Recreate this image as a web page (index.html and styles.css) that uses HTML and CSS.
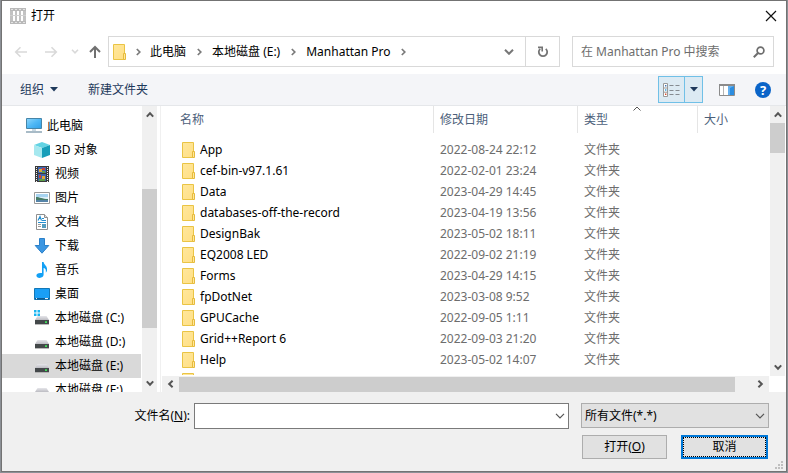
FILE: index.html
```html
<!DOCTYPE html>
<html lang="zh-CN">
<head>
<meta charset="UTF-8">
<meta name="viewport" content="width=device-width, initial-scale=1.0">
<title>打开</title>
<link rel="stylesheet" href="styles.css">
</head>
<body>
<!-- shared icons -->
<svg class="sprite" aria-hidden="true">
  <defs>
    <linearGradient id="g-folder" x1="0" y1="0" x2="1" y2="1">
      <stop offset="0" stop-color="#ffe79c"/><stop offset="1" stop-color="#ffdf85"/>
    </linearGradient>
    <linearGradient id="g-screen" x1="0" y1="0" x2="1" y2="1">
      <stop offset="0" stop-color="#8fd6fb"/><stop offset=".5" stop-color="#4fb8f5"/><stop offset="1" stop-color="#2f9fe8"/>
    </linearGradient>
    <linearGradient id="g-drive" x1="0" y1="0" x2="0" y2="1">
      <stop offset="0" stop-color="#e6e6ea"/><stop offset="1" stop-color="#bcbcc2"/>
    </linearGradient>
  </defs>
  <symbol id="folder" viewBox="0 0 14 16">
    <path d="M.5.5h11v15H.5z" fill="url(#g-folder)" stroke="#eac444"/>
    <path d="M10.5 9.5h2v6h-2z" fill="#ffe79c" stroke="#e6bb3c"/>
  </symbol>
  <symbol id="drive" viewBox="0 0 16 16">
    <path d="M3.5 6h9L15 10H1z" fill="url(#g-drive)"/>
    <path d="M1 10h14v4H1z" fill="#44484a"/>
    <path d="M1 14h14v.8H1z" fill="#a9a9a9"/>
    <path d="M11 11.2h2v1.8h-2z" fill="#3fe05a"/>
  </symbol>
  <symbol id="right" viewBox="0 0 5 8"><path d="M.8 1 3.8 4 .8 7" fill="none" stroke="#7a7a7a" stroke-width="1.7"/></symbol>
  <symbol id="down" viewBox="0 0 10 6"><path d="M1 .8l4 4 4-4" fill="none" stroke="currentColor" stroke-width="1.2"/></symbol>
  <symbol id="bar-up" viewBox="0 0 8 7"><path d="M.8 5.6 4 2.2l3.2 3.4" fill="none" stroke="#555" stroke-width="2"/></symbol>
  <symbol id="bar-down" viewBox="0 0 8 7"><path d="M.8 1.4 4 4.8l3.2-3.4" fill="none" stroke="#555" stroke-width="2"/></symbol>
  <symbol id="bar-left" viewBox="0 0 7 8"><path d="M5.6.8 2.2 4l3.4 3.2" fill="none" stroke="#555" stroke-width="2"/></symbol>
  <symbol id="bar-right" viewBox="0 0 7 8"><path d="M1.4.8 4.8 4 1.4 7.2" fill="none" stroke="#555" stroke-width="2"/></symbol>
</svg>

<div class="dialog" role="dialog" aria-labelledby="dialog-title">
  <header class="titlebar">
    <svg class="app-icon" width="16" height="16" viewBox="0 0 16 16" aria-hidden="true">
      <path d="M0 0h16v3H0zM0 13h16v3H0z" fill="#b9b9b9"/>
      <path d="M1 1h2v1H1zM5 1h2v1H5zM9 1h2v1H9zM13 1h2v1h-2zM1 14h2v1H1zM5 14h2v1H5zM9 14h2v1H9zM13 14h2v1h-2z" fill="#e3e3e3"/>
      <path d="M0 3h3v10H0zM5 3h2v10H5zM9 3h2v10H9zM13 3h3v10h-3z" fill="#c2c2c2"/>
      <path d="M0 7h16v1H0z" fill="#d0d0d0"/>
    </svg>
    <h1 class="title" id="dialog-title">打开</h1>
    <button class="close" type="button" aria-label="关闭">
      <svg width="12" height="12" viewBox="0 0 12 12"><path d="M1 1l10 10M11 1 1 11" stroke="#111" stroke-width="1.2"/></svg>
    </button>
  </header>

  <div class="location">
    <div class="history">
      <button class="history-btn off" type="button" aria-label="返回" disabled>
        <svg width="14" height="12" viewBox="0 0 14 12"><path d="M13 6H2M6.5 1.2 1.7 6l4.8 4.800" fill="none" stroke="currentColor" stroke-width="1.6"/></svg>
      </button>
      <button class="history-btn off" type="button" aria-label="前进" disabled>
        <svg width="14" height="12" viewBox="0 0 14 12"><path d="M1 6h11M7.5 1.2 12.3 6l-4.8 4.800" fill="none" stroke="currentColor" stroke-width="1.6"/></svg>
      </button>
      <button class="history-btn recent off" type="button" aria-label="最近浏览的位置" disabled>
        <svg width="8" height="5" viewBox="0 0 8 5"><path d="M1 .8l3 3 3-3" fill="none" stroke="currentColor" stroke-width="1.6"/></svg>
      </button>
      <button class="history-btn up" type="button" aria-label="上移">
        <svg width="14" height="14" viewBox="0 0 14 14"><path d="M7 13V2M2 7l5-5 5 5" fill="none" stroke="#707070" stroke-width="2"/></svg>
      </button>
    </div>
    <div class="address">
      <svg width="14" height="16" aria-hidden="true"><use href="#folder"/></svg>
      <span class="sep first"><svg width="5" height="8"><use href="#right"/></svg></span>
      <button class="crumb" type="button">此电脑</button>
      <span class="sep"><svg width="5" height="8"><use href="#right"/></svg></span>
      <button class="crumb" type="button">本地磁盘 (E:)</button>
      <span class="sep"><svg width="5" height="8"><use href="#right"/></svg></span>
      <button class="crumb" type="button">Manhattan Pro</button>
      <span class="sep"><svg width="5" height="8"><use href="#right"/></svg></span>
      <button class="address-drop" type="button" aria-label="以前的位置">
        <svg width="10" height="6" viewBox="0 0 10 6"><path d="M1 .8l4 4 4-4" fill="none" stroke="#777" stroke-width="2"/></svg>
      </button>
      <button class="refresh" type="button" aria-label="刷新">
        <svg width="12" height="12" viewBox="0 0 12 12"><path d="M8.8 2.8A4.2 4.2 0 1 1 3.2 2.8" fill="none" stroke="#747474" stroke-width="1.8"/><path d="M1 1.4h4.2v4.2" fill="none" stroke="#747474" stroke-width="1.6"/></svg>
      </button>
    </div>
    <div class="search">
      <input class="search-input" type="text" placeholder="在 Manhattan Pro 中搜索" aria-label="在 Manhattan Pro 中搜索">
      <svg width="12" height="12" viewBox="0 0 12 12" aria-hidden="true"><circle cx="7.5" cy="4.5" r="3.4" fill="none" stroke="#6e6e6e" stroke-width="1.7"/><path d="M5 7 .8 11.2" stroke="#6e6e6e" stroke-width="2"/></svg>
    </div>
  </div>

  <div class="toolbar">
    <button class="tool" type="button">组织
      <svg width="8" height="5" viewBox="0 0 8 5"><path d="M0 0h8L4 4.5z" fill="#1e395b"/></svg>
    </button>
    <button class="tool" type="button">新建文件夹</button>
    <div class="view">
      <button class="view-mode" type="button" aria-label="更改您的视图">
        <svg width="17" height="14" viewBox="0 0 17 14">
          <path d="M.5.5h4v13h-4zM.5 5h4M.5 9.2h4" fill="#fff" stroke="#999"/>
          <path d="M2 2h1.4v1.500H2z" fill="#3f78b8"/><path d="M2 6.3h1.4v1.500H2z" fill="#2fa0e0"/><path d="M2 10.5h1.4V12H2z" fill="#d8502f"/>
          <path d="M6.5 2.5h4M12.5 2.5h4M6.5 7.5h4M12.5 7.5h4M6.5 11.5h4M12.5 11.5h4" stroke="#858b91"/>
        </svg>
      </button>
      <button class="view-more" type="button" aria-label="更多选项">
        <svg width="8" height="5" viewBox="0 0 8 5"><path d="M0 0h8L4 4.5z" fill="#1e395b"/></svg>
      </button>
    </div>
    <button class="icon-btn" type="button" aria-label="显示预览窗格">
      <svg width="16" height="12" viewBox="0 0 16 12">
        <path d="M.5.5h15v11H.5z" fill="#fff" stroke="#8b8b8b"/>
        <path d="M0 0h16v2H0z" fill="#8b8b8b"/><path d="M4.500 2v9" stroke="#b5b5b5"/>
        <path d="M9 2h6v9H9z" fill="#63b0f0"/><path d="M11 4l4-2v9h-4z" fill="#2b8de0"/>
      </svg>
    </button>
    <button class="help" type="button" aria-label="获取帮助">?</button>
  </div>

  <main class="browser">
    <nav class="places" aria-label="位置">
      <a class="place root" href="#"><svg width="17" height="16" viewBox="0 0 17 16"><path d="M.5.5h15v10H.5z" fill="url(#g-screen)" stroke="#4685a8"/><path d="M6 11h4v2H6z" fill="#c9d8e2"/><path d="M0 14h16" stroke="#8ba4b5" stroke-width="1.5"/></svg>此电脑</a>
      <a class="place" href="#"><svg width="16" height="16" viewBox="0 0 16 16"><path d="M0 3l8-3 8 3-8 3z" fill="#62d3e3"/><path d="M0 3l8 3v10l-8-3z" fill="#a6e8ef"/><path d="M8 6l8-3v10l-8 3z" fill="#169eb9"/></svg>3D 对象</a>
      <a class="place" href="#"><svg width="16" height="16" viewBox="0 0 16 16"><path d="M1 0h14v16H1z" fill="#3a3a3a"/><path d="M4 1h8v6H4z" fill="#4267b5"/><path d="M4 8h8v7H4z" fill="#3d64ad"/><path d="M5 3h3v3H5zM8 10h3v3H8z" fill="#e0a63a"/><path d="M8 2h3v2H8zM5 9h2v3H5z" fill="#cb4038"/><path d="M8 5h3v2H8zM5 13h6v2H5z" fill="#5d9c48"/><path d="M2.5 1v15M13.5 1v15" stroke="#f2f2f2" stroke-dasharray="1 1"/></svg>视频</a>
      <a class="place" href="#"><svg width="16" height="16" viewBox="0 0 16 16"><path d="M.5 2.5h15v11H.5z" fill="#fff" stroke="#999"/><path d="M2 4h12v8H2z" fill="#a8d4f0"/><path d="M2 7h12v3H2z" fill="#deeff8"/><path d="M2 7c4 0 6 2 12 2v2H2z" fill="#477c66"/><path d="M2 10h12v2H2z" fill="#5684a8"/></svg>图片</a>
      <a class="place" href="#"><svg width="16" height="16" viewBox="0 0 16 16"><path d="M2.5.5h8l3 3v12h-11z" fill="#fff" stroke="#8f8f8f"/><path d="M10.5.5v3h3" fill="#ddd" stroke="#8f8f8f"/><path d="M4 6.5 6 2.500l1.500 4M8 4.500h2M8 6.500h4M4 8.500h8" fill="none" stroke="#258fd0" stroke-width="1.2"/><path d="M4 10.5h3M4 12.5h3" stroke="#999"/><path d="M8 10h4v4H8z" fill="#559dbf"/></svg>文档</a>
      <a class="place" href="#"><svg width="16" height="16" viewBox="0 0 16 16"><path d="M5.5.5h5v7h4.300L8 15.200 1.200 7.500h4.300z" fill="#3d97e2" stroke="#2b80c9"/></svg>下载</a>
      <a class="place" href="#"><svg width="16" height="16" viewBox="0 0 16 16"><path d="M8 0h1.600c.3 3 4.200 4 3.400 8.500-.4 1.500-1 2-1.200 2C12.300 7 10.800 6.300 9.600 6v6.800c0 1.700-1.700 3.100-4 3.100-1.900 0-3.200-1-3.200-2.400 0-1.800 2.200-3 5.600-2.400z" fill="#12a0f5"/></svg>音乐</a>
      <a class="place" href="#"><svg width="16" height="16" viewBox="0 0 16 16"><path d="M.5 2.5h15v11H.5z" fill="#1a9ff6" stroke="#1277b6"/><path d="M1 12h14v1.500H1z" fill="#0d5b93"/><path d="M2 12.600h1M11 12.600h3" stroke="#fff"/></svg>桌面</a>
      <a class="place" href="#"><svg width="16" height="16" viewBox="0 0 16 16"><use href="#drive"/><path d="M0 0h2.500v2.500H0zM3.500 0H6v2.500H3.500zM0 3.500h2.500V6H0zM3.500 3.500H6V6H3.500z" fill="#18b4f0"/></svg>本地磁盘 (C:)</a>
      <a class="place" href="#"><svg width="16" height="16"><use href="#drive"/></svg>本地磁盘 (D:)</a>
      <a class="place current" href="#"><svg width="16" height="16"><use href="#drive"/></svg>本地磁盘 (E:)</a>
      <a class="place" href="#"><svg width="16" height="16"><use href="#drive"/></svg>本地磁盘 (F:)</a>
    </nav>
    <div class="vbar">
      <svg width="8" height="7"><use href="#bar-up"/></svg>
      <div class="vbar-track"><div class="thumb places-thumb"></div></div>
      <svg width="8" height="7"><use href="#bar-down"/></svg>
    </div>

    <section class="files">
      <div class="files-view">
        <table class="files-table">
          <thead>
            <tr>
              <th class="col-name">名称</th>
              <th class="col-date">修改日期</th>
              <th class="col-type" aria-sort="ascending">类型<svg class="sort" width="8" height="5" viewBox="0 0 8 5"><path d="M.5 4.5 4 1l3.500 3.500" fill="none" stroke="#555"/></svg></th>
              <th class="col-size">大小</th>
            </tr>
          </thead>
          <tbody>
            <tr><td><svg width="14" height="16"><use href="#folder"/></svg>App</td><td>2022-08-24 22:12</td><td>文件夹</td><td></td></tr>
            <tr><td><svg width="14" height="16"><use href="#folder"/></svg>cef-bin-v97.1.61</td><td>2022-02-01 23:24</td><td>文件夹</td><td></td></tr>
            <tr><td><svg width="14" height="16"><use href="#folder"/></svg>Data</td><td>2023-04-29 14:45</td><td>文件夹</td><td></td></tr>
            <tr><td><svg width="14" height="16"><use href="#folder"/></svg>databases-off-the-record</td><td>2023-04-19 13:56</td><td>文件夹</td><td></td></tr>
            <tr><td><svg width="14" height="16"><use href="#folder"/></svg>DesignBak</td><td>2023-05-02 18:11</td><td>文件夹</td><td></td></tr>
            <tr><td><svg width="14" height="16"><use href="#folder"/></svg>EQ2008 LED</td><td>2022-09-02 21:19</td><td>文件夹</td><td></td></tr>
            <tr><td><svg width="14" height="16"><use href="#folder"/></svg>Forms</td><td>2023-04-29 14:15</td><td>文件夹</td><td></td></tr>
            <tr><td><svg width="14" height="16"><use href="#folder"/></svg>fpDotNet</td><td>2023-03-08 9:52</td><td>文件夹</td><td></td></tr>
            <tr><td><svg width="14" height="16"><use href="#folder"/></svg>GPUCache</td><td>2022-09-05 1:11</td><td>文件夹</td><td></td></tr>
            <tr><td><svg width="14" height="16"><use href="#folder"/></svg>Grid++Report 6</td><td>2022-09-03 21:20</td><td>文件夹</td><td></td></tr>
            <tr><td><svg width="14" height="16"><use href="#folder"/></svg>Help</td><td>2023-05-02 14:07</td><td>文件夹</td><td></td></tr>
            <tr><td><svg width="14" height="16"><use href="#folder"/></svg></td><td></td><td></td><td></td></tr>
          </tbody>
        </table>
      </div>
      <div class="vbar">
        <svg width="8" height="7"><use href="#bar-up"/></svg>
        <div class="vbar-track"><div class="thumb files-thumb"></div></div>
        <svg width="8" height="7"><use href="#bar-down"/></svg>
      </div>
      <div class="hbar">
        <svg width="7" height="8"><use href="#bar-left"/></svg>
        <div class="hbar-track"><div class="thumb"></div></div>
        <svg width="7" height="8"><use href="#bar-right"/></svg>
      </div>
    </section>
  </main>

  <form class="footer">
    <label class="name-label" for="filename">文件名(<u>N</u>):</label>
    <div class="combo">
      <input class="combo-input" id="filename" type="text">
      <svg width="10" height="6" aria-hidden="true"><use href="#down"/></svg>
    </div>
    <div class="filter">
      <select class="filter-select" aria-label="文件类型">
        <option>所有文件(*.*)</option>
      </select>
      <svg class="filter-arrow" width="10" height="6" aria-hidden="true"><use href="#down"/></svg>
    </div>
    <div class="actions">
      <button class="btn" type="button">打开(<u>O</u>)</button>
      <button class="btn btn-default" type="button"><span class="focus">取消</span></button>
    </div>
    <svg class="grip" width="10" height="10" viewBox="0 0 10 10" aria-hidden="true"><path d="M6 0h2v2H6zM3 3h2v2H3zM6 3h2v2H6zM0 6h2v2H0zM3 6h2v2H3zM6 6h2v2H6z" fill="#bfbfbf"/></svg>
  </form>
</div>
</body>
</html>
```

FILE: styles.css
```css
* {
  box-sizing: border-box;
}

body {
  margin: 0;
  padding: 0 1px 1px;
  background: #8c9096;
  font-family: "Noto Sans", "Noto Sans CJK SC", sans-serif;
  font-size: 12px;
  line-height: 16px;
  color: #000;
}

button,
input,
select {
  font: inherit;
  color: inherit;
  margin: 0;
  padding: 0;
  border: 0;
  background: none;
}

svg {
  display: block;
  flex: none;
}

.sprite {
  position: absolute;
  width: 0;
  height: 0;
}

.dialog {
  display: flex;
  flex-direction: column;
  height: calc(100vh - 1px);
  border: 1px solid #737373;
  background: #fff;
}

/* title bar */
.titlebar {
  display: flex;
  align-items: center;
  height: 29px;
  padding: 0 8px;
}

.title {
  flex: 1;
  margin: 0 0 0 5px;
  font-size: 12px;
  font-weight: normal;
}

.close {
  display: flex;
  padding: 1px;
}

/* address row */
.location {
  display: flex;
  align-items: center;
  padding: 6px 12px 7px 8px;
}

.history {
  display: flex;
  align-items: center;
  gap: 8px;
  margin-right: 6px;
}

.history-btn {
  display: flex;
  justify-content: center;
  width: 22px;
}

.history-btn.off {
  color: #d9d9d9;
}

.history-btn.recent {
  width: 10px;
}

.history-btn.up {
  width: 14px;
}

.address {
  display: flex;
  flex: 1;
  align-items: center;
  height: 31px;
  padding-left: 4px;
  border: 1px solid #d9d9d9;
}

.sep {
  display: flex;
  justify-content: center;
  width: 26px;
}

.sep.first {
  width: 23px;
}

.crumb {
  white-space: nowrap;
}

.address-drop {
  display: flex;
  justify-content: center;
  width: 32px;
  margin-left: auto;
}

.refresh {
  display: flex;
  align-items: center;
  justify-content: center;
  align-self: stretch;
  width: 34px;
  border-left: 1px solid #d9d9d9;
}

.search {
  display: flex;
  align-items: center;
  width: 202px;
  height: 31px;
  margin-left: 12px;
  padding: 0 8px;
  border: 1px solid #d9d9d9;
}

.search-input {
  flex: 1;
  min-width: 0;
  outline: none;
}

.search-input::placeholder {
  color: #6d6d6d;
  opacity: 1;
}

/* toolbar */
.toolbar {
  display: flex;
  align-items: center;
  height: 32px;
  padding: 0 15px 0 18px;
  border-bottom: 1px solid #e5e7ea;
  background: #f4f5f8;
}

.tool {
  display: flex;
  align-items: center;
  gap: 6px;
  margin-right: 30px;
  color: #1e395b;
}

.view {
  display: flex;
  width: 45px;
  height: 27px;
  margin-left: auto;
  border: 1px solid #70c0e7;
  background: #dceaf3;
}

.view-mode,
.view-more {
  display: flex;
  flex: 1;
  align-items: center;
  justify-content: center;
}

.view-mode {
  flex: none;
  width: 26px;
  border-right: 1px solid #70c0e7;
}

.icon-btn {
  margin: 0 20px 0 16px;
}

.help {
  width: 16px;
  height: 16px;
  border-radius: 50%;
  background: #0a64c8;
  color: #fff;
  font-size: 13px;
  font-weight: bold;
  line-height: 16px;
}

/* places and files */
.browser {
  display: flex;
  flex: 1;
  min-height: 0;
}

.places {
  width: 140px;
  padding-top: 8px;
  overflow: hidden;
}

.place {
  display: flex;
  align-items: center;
  gap: 5px;
  height: 24px;
  margin-right: 1px;
  padding-left: 32px;
  color: #000;
  text-decoration: none;
  white-space: nowrap;
}

.place.root {
  gap: 4px;
  padding-left: 24px;
}

.place.current {
  background: #d9d9d9;
}

.vbar {
  display: flex;
  flex-direction: column;
  align-items: center;
  width: 15px;
  padding: 5px 0;
  background: #f0f0f0;
}

.vbar-track {
  flex: 1;
  width: 100%;
  margin: 5px 0;
}

.thumb {
  background: #cdcdcd;
}

.places-thumb {
  height: 55%;
  margin-top: 66px;
}

.files-thumb {
  height: 30px;
}

.files {
  display: grid;
  flex: 1;
  grid-template-columns: 1fr 17px;
  grid-template-rows: 1fr 16px;
  min-width: 0;
  margin-left: 3px;
  border-left: 1px solid #f0f0f0;
}

.files-view {
  min-height: 0;
  margin-bottom: 1px;
  overflow: hidden;
}

.files .vbar {
  margin: 0 1px;
}

.files-table {
  width: 100%;
  border-collapse: separate;
  border-spacing: 0;
  table-layout: fixed;
}

.files-table th {
  position: relative;
  height: 27px;
  padding: 0 0 0 6px;
  border-right: 1px solid #e5e5e5;
  color: #4c607a;
  font-weight: normal;
  text-align: left;
}

.files-table .col-name {
  width: 273px;
  padding-left: 19px;
}

.files-table .col-date {
  width: 144px;
}

.files-table .col-type {
  width: 120px;
}

.files-table .col-size {
  border-right: 0;
}

.sort {
  position: absolute;
  top: 0;
  left: 55px;
}

.files-table tbody::before {
  content: "";
  display: block;
  height: 6px;
}

.files-table td {
  height: 21px;
  padding: 0 0 0 6px;
  color: #6d6d6d;
  white-space: nowrap;
}

.files-table td:first-child {
  display: flex;
  align-items: center;
  gap: 4px;
  padding-left: 21px;
  color: #000;
}

.hbar {
  display: flex;
  align-items: center;
  margin-left: 1px;
  padding: 0 5px;
  background: #f0f0f0;
}

.hbar-track {
  flex: 1;
  margin: 0 22px 0 5px;
}

.hbar .thumb {
  height: 15px;
}

/* file name, filter and buttons */
.footer {
  position: relative;
  display: grid;
  grid-template-columns: 188px 1fr 188px;
  row-gap: 6px;
  padding: 11px 17px 12px 0;
  background: #f0f0f0;
}

.name-label {
  align-self: center;
  text-align: right;
}

.combo {
  display: flex;
  align-items: center;
  height: 26px;
  margin: 0 12px 0 4px;
  padding: 0 3px;
  border: 1px solid #7a7a7a;
  background: #fff;
  color: #555;
}

.combo-input {
  flex: 1;
  min-width: 0;
  color: #000;
  outline: none;
}

.filter {
  position: relative;
  height: 25px;
  color: #555;
}

.filter-select {
  width: 100%;
  height: 25px;
  padding-left: 3px;
  border: 1px solid #adadad;
  border-radius: 0;
  background: #e1e1e1;
  color: #000;
  appearance: none;
}

.filter-arrow {
  position: absolute;
  top: 10px;
  right: 4px;
  pointer-events: none;
}

.actions {
  display: flex;
  grid-column: 3;
  gap: 14px;
  padding: 0 1px;
}

.btn {
  flex: 1;
  height: 24px;
  border: 1px solid #adadad;
  background: #e1e1e1;
}

.btn-default {
  border: 2px solid #0078d7;
}

.focus {
  display: block;
  height: 20px;
  border: 1px dotted #000;
  line-height: 18px;
}

.grip {
  position: absolute;
  right: 1px;
  bottom: 0;
}
```
